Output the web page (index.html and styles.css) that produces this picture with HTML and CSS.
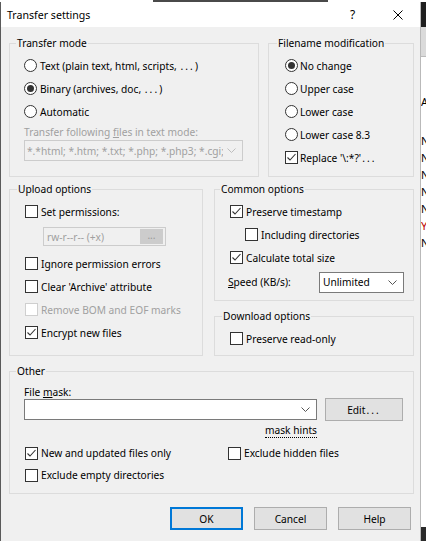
FILE: index.html
```html
<!DOCTYPE html>
<html lang="en">
<head>
  <meta charset="UTF-8" />
  <meta name="viewport" content="width=device-width, initial-scale=1.0"/>
  <title>Transfer settings</title>
  <link rel="stylesheet" href="styles.css">
</head>
<body>
  <div class="topband"><span class="behind-text"></span></div>

  <div class="screen">
    <div class="dialog">
      <div class="titlebar">
        <span class="title">Transfer settings</span>
        <span class="caption-btn">?</span>
        <span class="caption-btn">
          <svg width="10" height="10" viewBox="0 0 10 10">
            <path d="M0.5 0.5 L9.5 9.5 M9.5 0.5 L0.5 9.5" stroke="#000" stroke-width="1" fill="none"/>
          </svg>
        </span>
      </div>

      <div class="content">
        <!-- transfer mode + filename modification -->
        <div class="row row-top">
          <fieldset class="group mode">
            <legend>Transfer mode</legend>
            <div class="opt"><span class="radio"></span>Text (plain text, html, scripts,&nbsp;<span class="dots">...</span>)</div>
            <div class="opt"><span class="radio on"></span>Binary (archives, doc,&nbsp;<span class="dots">...</span>)</div>
            <div class="opt"><span class="radio"></span>Automatic</div>
            <div class="field-label disabled">Transfer following <u>f</u>iles in text mode:</div>
            <div class="combo disabled">
              <span class="combo-text">*.*html; *.htm; *.txt; *.php; *.php3; *.cgi; *.c; *.cpp</span>
              <svg class="chev" width="9" height="5" viewBox="0 0 9 5"><path d="M0.5 0.5 L4.5 4.5 L8.5 0.5" stroke="#bdbdbd" fill="none"/></svg>
            </div>
          </fieldset>

          <fieldset class="group rename">
            <legend>Filename modification</legend>
            <div class="opt"><span class="radio on"></span>No change</div>
            <div class="opt"><span class="radio"></span>Upper case</div>
            <div class="opt"><span class="radio"></span>Lower case</div>
            <div class="opt"><span class="radio"></span>Lower case 8.3</div>
            <div class="opt"><span class="check on"></span>Replace '\:*?'<span class="dots">...</span></div>
          </fieldset>
        </div>

        <!-- upload / common / download -->
        <div class="row row-mid">
          <fieldset class="group upload">
            <legend>Upload options</legend>
            <div class="opt"><span class="check"></span>Set permissions:</div>
            <div class="perm">
              <span>rw-r--r-- (+x)</span>
              <span class="perm-btn">...</span>
            </div>
            <div class="opt spaced"><span class="check"></span>Ignore permission errors</div>
            <div class="opt"><span class="check"></span>Clear 'Archive' attribute</div>
            <div class="opt disabled"><span class="check"></span>Remove BOM and EOF marks</div>
            <div class="opt"><span class="check on"></span>Encrypt new files</div>
          </fieldset>

          <div class="stack">
            <fieldset class="group common">
              <legend>Common options</legend>
              <div class="opt"><span class="check on"></span>Preserve timestamp</div>
              <div class="opt indent"><span class="check"></span>Including directories</div>
              <div class="opt"><span class="check on"></span>Calculate total size</div>
              <div class="speed">
                <span class="speed-label"><u>S</u>peed (KB/s):</span>
                <div class="combo select">
                  <span class="combo-text">Unlimited</span>
                  <svg class="chev" width="9" height="5" viewBox="0 0 9 5"><path d="M0.5 0.5 L4.5 4.5 L8.5 0.5" stroke="#555" fill="none"/></svg>
                </div>
              </div>
            </fieldset>

            <fieldset class="group download">
              <legend>Download options</legend>
              <div class="opt"><span class="check"></span>Preserve read-only</div>
            </fieldset>
          </div>
        </div>

        <!-- other -->
        <fieldset class="group other">
          <legend>Other</legend>
          <div class="field-label">File <u>m</u>ask:</div>
          <div class="mask-row">
            <div class="combo mask">
              <span class="combo-text"></span>
              <svg class="chev" width="9" height="5" viewBox="0 0 9 5"><path d="M0.5 0.5 L4.5 4.5 L8.5 0.5" stroke="#555" fill="none"/></svg>
            </div>
            <span class="btn edit">Edit<span class="dots">...</span></span>
          </div>
          <div class="hints"><span>mask hints</span></div>
          <div class="other-opts">
            <div class="opt"><span class="check on"></span>New and updated files only</div>
            <div class="opt"><span class="check"></span>Exclude hidden files</div>
            <div class="opt"><span class="check"></span>Exclude empty directories</div>
          </div>
        </fieldset>

        <div class="buttons">
          <span class="btn default">OK</span>
          <span class="btn">Cancel</span>
          <span class="btn">Help</span>
        </div>
      </div>
    </div>

    <!-- the window behind the dialog -->
    <div class="behind">
      <div class="behind-head"></div>
      <div class="behind-cols"></div>
      <div class="behind-list">
        <span>A</span>
        <span class="gap"></span>
        <span>N</span><span>N</span><span>N</span><span>N</span><span>N</span>
        <span class="red">Y</span><span>N</span>
      </div>
      <div class="behind-foot"></div>
    </div>
  </div>
</body>
</html>
```

FILE: styles.css
```css
* {
  box-sizing: border-box;
}

html,
body {
  margin: 0;
}

body {
  width: 426px;
  height: 541px;
  overflow: hidden;
  background: #fff;
  font-family: "Noto Sans", "Segoe UI", sans-serif;
  font-size: 10.2px;
  color: #000;
}

.topband {
  height: 2px;
  display: flex;
}

.behind-text {
  margin-left: 153px;
  width: 175px;
  background: #4a4a4a;
}

.screen {
  display: flex;
  height: 539px;
  border-left: 1px solid #5a5a5a;
}

.dialog {
  width: 420px;
  display: flex;
  flex-direction: column;
  background: #f0f0f0;
  border-right: 1px solid #b9b9b9;
}

/* title bar */
.titlebar {
  height: 25px;
  flex: none;
  display: flex;
  align-items: center;
  background: #fff;
}

.title {
  flex: 1;
  padding-left: 6px;
  font-size: 10.6px;
}

.caption-btn {
  width: 45px;
  height: 25px;
  display: flex;
  align-items: center;
  justify-content: center;
  font-size: 12px;
}

/* dialog body */
.content {
  padding: 8px 0 0 8px;
}

.row {
  display: grid;
  align-items: stretch;
}

.row-top {
  grid-template-columns: 250px 146px;
  column-gap: 9px;
}

.row-mid {
  margin-top: 4px;
  grid-template-columns: 194px 200px;
  column-gap: 11px;
}

.stack {
  display: flex;
  flex-direction: column;
  gap: 7px;
}

.group {
  margin: 0;
  min-width: 0;
  border: 1px solid #dcdcdc;
  padding: 3px 8px 0 14px;
}

.group legend {
  line-height: 16px;
  padding: 0 1px;
  margin-left: -8px;
}

.opt {
  height: 23px;
  display: flex;
  align-items: center;
  white-space: nowrap;
}

/* wide ellipsis, as the system font draws it */
.dots {
  letter-spacing: 2.1px;
  padding-left: 1px;
}

.radio,
.check {
  flex: none;
  width: 13px;
  height: 13px;
  margin-right: 3px;
  border: 1px solid #333;
  background: #fff;
}

.radio {
  border-radius: 50%;
  display: flex;
  align-items: center;
  justify-content: center;
}

.radio.on::after {
  content: "";
  width: 7px;
  height: 7px;
  border-radius: 50%;
  background: #333;
}

.check.on {
  background: #fff url("data:image/svg+xml,%3Csvg xmlns='http://www.w3.org/2000/svg' width='11' height='11' viewBox='0 0 11 11'%3E%3Cpath d='M1.5 5.5 L4 8 L9.5 2' stroke='%23333' stroke-width='1.1' fill='none'/%3E%3C/svg%3E") center / 11px 11px no-repeat;
}

.disabled {
  color: #a0a0a0;
}

.opt.disabled .check {
  border-color: #cfcfcf;
}

/* transfer mode */
.mode {
  padding-bottom: 14px;
}

.field-label {
  line-height: 14px;
  margin-top: 2px;
}

.combo {
  height: 21px;
  display: flex;
  align-items: center;
  border: 1px solid #7a7a7a;
  background: #fff;
  padding: 0 6px 0 2px;
  overflow: hidden;
}

.combo-text {
  flex: 1;
  overflow: hidden;
  white-space: nowrap;
}

.chev {
  flex: none;
  margin-left: 4px;
}

.combo.disabled {
  margin-top: 1px;
  width: 219px;
  border-color: #cccccc;
  background: #f0f0f0;
}

.rename {
  padding-left: 16px;
  padding-bottom: 7px;
}

.rename .radio,
.rename .check {
  margin-right: 2px;
}

/* upload options */
.upload {
  padding-left: 15px;
  padding-bottom: 11px;
}

.perm {
  margin: 4px 0 0 18px;
  width: 123px;
  height: 19px;
  display: flex;
  align-items: center;
  justify-content: space-between;
  padding: 0 2px 0 3px;
  border: 1px solid #cccccc;
  color: #a0a0a0;
}

.perm-btn {
  width: 23px;
  height: 15px;
  line-height: 13px;
  text-align: center;
  background: #cccccc;
  color: #9a9a9a;
}

.opt.spaced {
  margin-top: 6px;
}

/* common + download */
.common {
  padding-left: 13px;
  padding-bottom: 7px;
}

.common .check {
  margin-left: 2px;
}

.common .indent .check {
  margin-left: 17px;
}

.speed {
  margin-top: 2px;
  height: 22px;
  display: flex;
  align-items: center;
}

.speed-label {
  width: 91px;
}

.combo.select {
  width: 85px;
  padding-left: 3px;
  padding-right: 6px;
}

.download {
  flex: 1;
  padding-left: 15px;
}

/* other */
.other {
  margin-top: 7px;
  width: 405px;
  padding: 6px 8px 7px 14px;
}

.other .field-label {
  margin-top: 0;
}

.mask-row {
  margin-top: -1px;
  height: 23px;
  display: flex;
  align-items: center;
}

.combo.mask {
  width: 293px;
  height: 21px;
}

.btn {
  display: flex;
  align-items: center;
  justify-content: center;
  width: 73px;
  height: 23px;
  background: #e1e1e1;
  border: 1px solid #adadad;
}

.btn.edit {
  width: 78px;
  margin-left: 8px;
}

.hints {
  width: 293px;
  margin-top: 2px;
  line-height: 14px;
  text-align: right;
}

.hints span {
  border-bottom: 1px dotted #000;
}

.other-opts {
  margin-top: 5px;
  display: grid;
  grid-template-columns: 203px 1fr;
}

.other-opts .opt {
  height: 22px;
}

.other-opts .check {
  margin-left: 1px;
}

/* dialog buttons */
.buttons {
  margin-top: 13px;
  padding-right: 9px;
  display: flex;
  justify-content: flex-end;
  gap: 11px;
}

.btn.default {
  border: 2px solid #0078d7;
}

/* the window behind */
.behind {
  flex: 1;
  display: flex;
  flex-direction: column;
  overflow: hidden;
  background: #fff;
}

.behind-head {
  height: 25px;
  background: #1f1f1f;
}

.behind-cols {
  height: 30px;
  background: #dadada;
  border-bottom: 1px solid #bbb;
}

.behind-list {
  flex: 1;
  display: flex;
  flex-direction: column;
  padding-top: 36px;
  line-height: 17px;
  font-size: 11px;
}

.behind-list .gap {
  height: 22px;
}

.behind-list .red {
  color: #b00;
}

.behind-foot {
  height: 14px;
  background: #2a2a2a;
}
```
